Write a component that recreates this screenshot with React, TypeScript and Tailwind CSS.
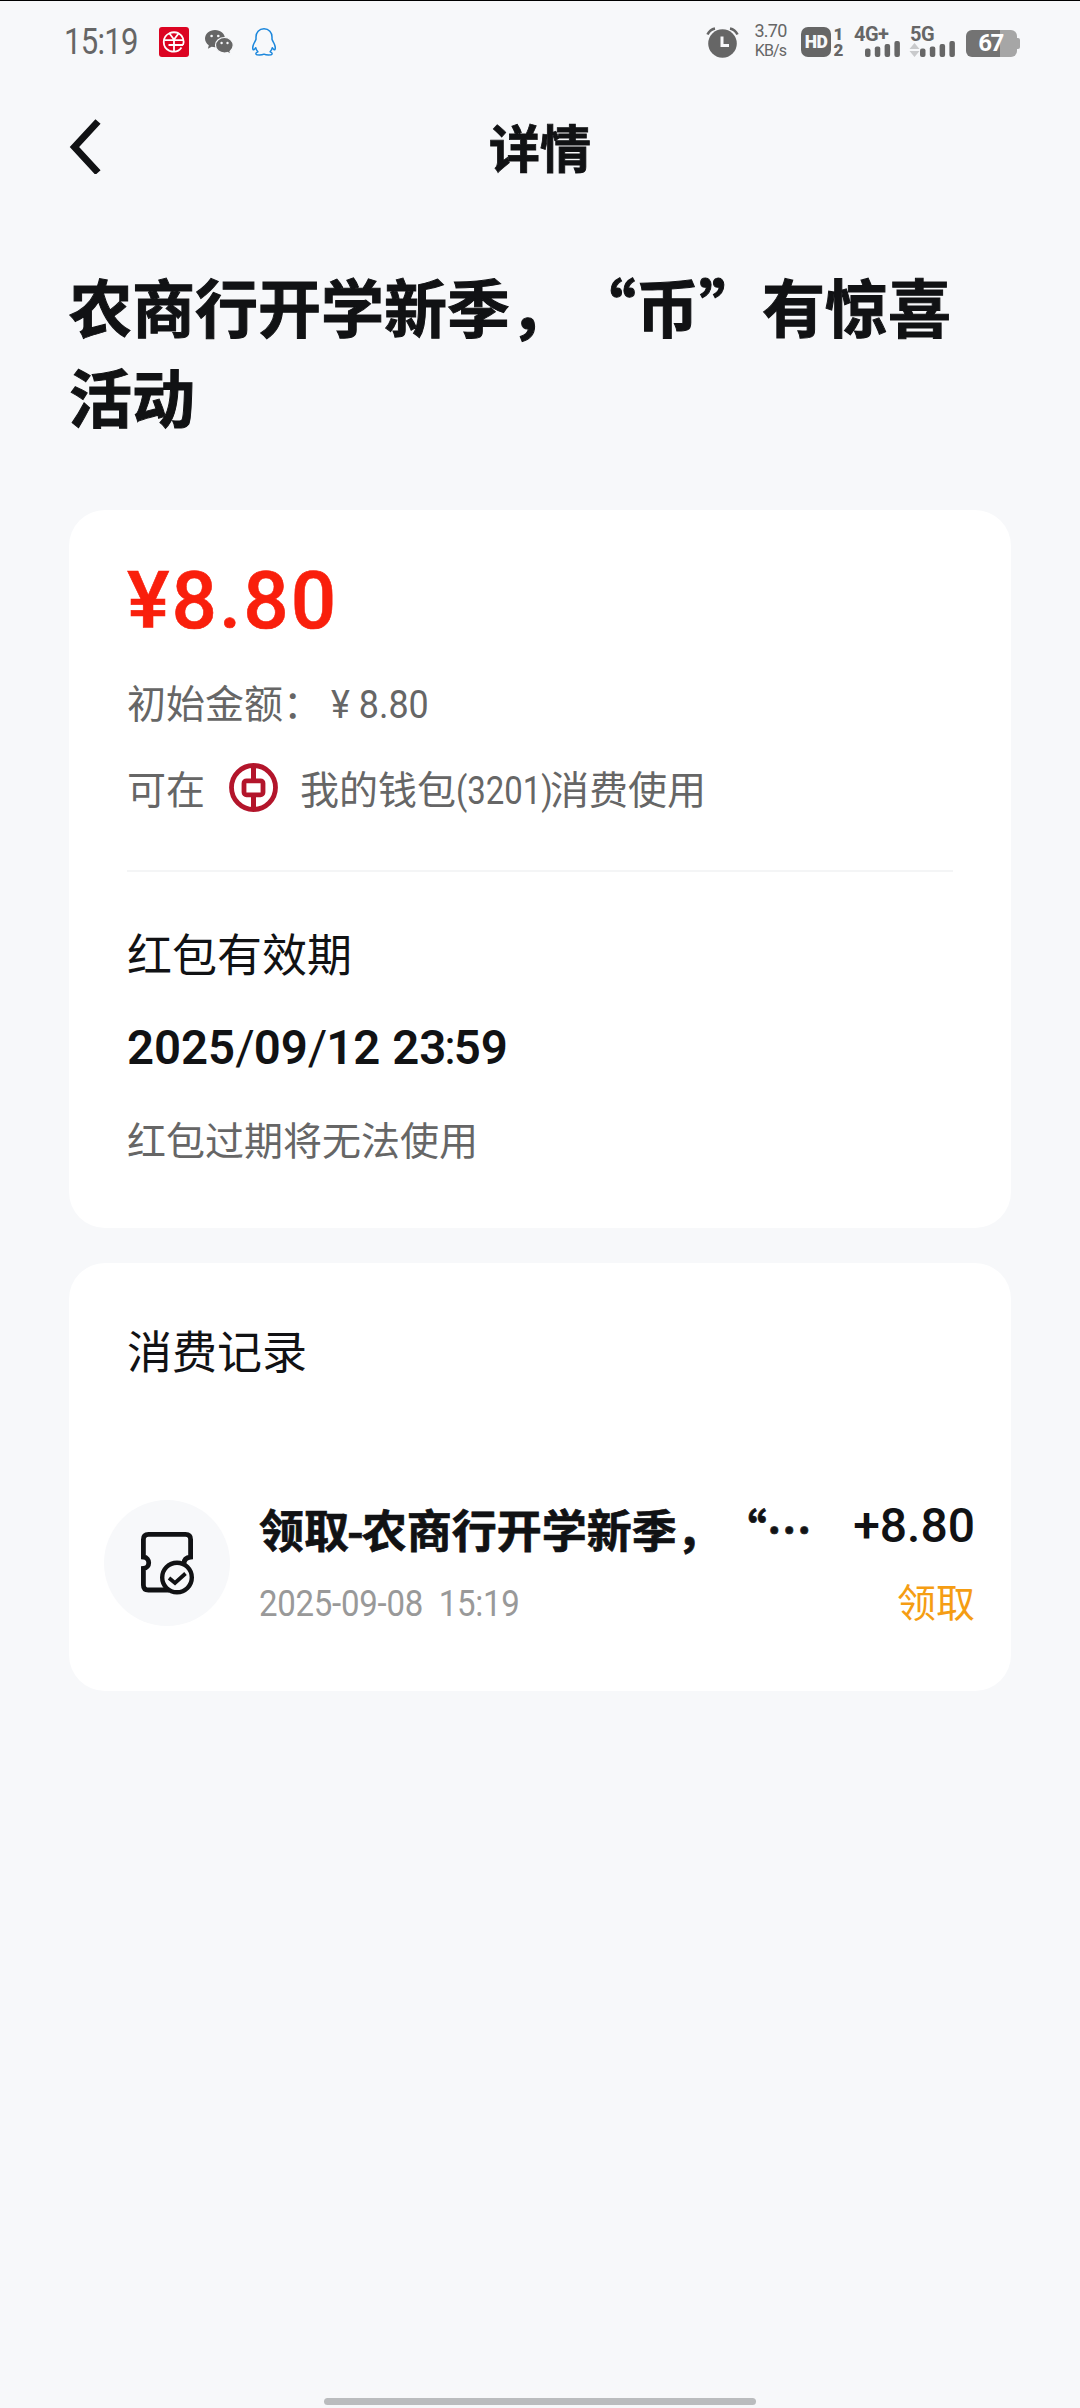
import type { ReactNode } from "react";

const cjk = "font-['Noto_Sans_CJK_SC',sans-serif]";
const mixed = "font-['Roboto','Noto_Sans_CJK_SC',sans-serif]";

function SignalBars() {
  return (
    <svg width="35" height="16" viewBox="0 0 35 16" fill="#666" className="shrink-0">
      <rect x="0" y="7.5" width="5.5" height="8.5" rx="2" />
      <rect x="9.8" y="5.5" width="5.5" height="10.5" rx="2" />
      <rect x="19.6" y="3" width="5.5" height="13" rx="2" />
      <rect x="29.4" y="0" width="5.5" height="16" rx="2" />
    </svg>
  );
}

function StatusBar() {
  return (
    <div className="flex h-[82px] items-center pl-[64px] text-[#666]">
      <span className={`${mixed} w-[95px] shrink-0 origin-left scale-x-[0.84] text-[37px] leading-9 tracking-[-0.9px]`}>15:19</span>
      <svg width="30" height="30" viewBox="0 0 30 30" className="shrink-0">
        <rect width="30" height="30" rx="3" fill="#dc0422" />
        <g fill="none" stroke="#fff" strokeWidth="1.8">
          <path d="M10.5 6.2A9.6 9.6 0 0 0 10.5 23.8M19.5 6.2A9.6 9.6 0 0 1 24 18M10.5 6.2Q15 4.3 19.5 6.2M10.5 23.8Q18.5 26.5 22.5 20.5" />
          <path d="M10.5 6.5L15 12.5L19.5 6.5M5.5 13.2H24.5M9.5 18H24M15 12.5V24.8" />
        </g>
      </svg>
      <svg width="29" height="25" viewBox="0 0 29 25" className="ml-4 shrink-0">
        <path d="M10 0C4.3 0 0 3.9 0 8.6c0 2.8 1.5 5.2 3.8 6.7L2.9 18.8l3.7-2c1.1.3 2.2.5 3.4.5 5.6 0 10-3.9 10-8.7S15.6 0 10 0z" fill="#666" />
        <path d="M19.5 7.5c-5 0-9 3.5-9 7.8s4 7.7 9 7.7c1.1 0 2.1-.2 3.1-.5l3.2 1.9-.8-3c2-1.4 3.2-3.6 3.2-6.1 0-4.3-3.9-7.8-8.7-7.8z" fill="#666" stroke="#f7f8fa" strokeWidth="1.2" />
        <g fill="#f7f8fa">
          <circle cx="6.6" cy="6" r="1.3" />
          <circle cx="13.3" cy="6" r="1.3" />
          <circle cx="16.6" cy="13" r="1.2" />
          <circle cx="22.5" cy="13" r="1.2" />
        </g>
      </svg>
      <svg width="24" height="28" viewBox="0 0 24 28" fill="none" stroke="#1b87dc" strokeWidth="1.5" strokeLinejoin="round" className="ml-[18px] shrink-0">
        <path d="M12 .8C7 .8 4 4.4 4 9v2.2C3.6 12.5 3 13.4 2.4 14.5.9 17.3.3 20 1.1 21.6c.6.5 1.7-.4 2.6-1.9.3 1.6 1 2.9 2.2 4-1.5.6-2.2 1.5-1.9 2.4.6 1.3 5.8 1.2 8 .1 2.2 1.1 7.4 1.2 8-.1.3-.9-.4-1.8-1.9-2.4 1.2-1.1 1.9-2.4 2.2-4 .9 1.5 2 2.4 2.6 1.9.8-1.6.2-4.3-1.3-7.1-.6-1.1-1.2-2-1.6-3.3V9C20 4.4 17 .8 12 .8z" />
      </svg>

      <div className="mr-[60px] ml-auto flex h-[82px] items-center">
        <svg width="33" height="31" viewBox="0 0 33 31" className="shrink-0">
          <circle cx="16.5" cy="16.5" r="14.3" fill="#666" />
          <path d="M1.5 7.5Q4 2.5 9 1.5M31.5 7.5Q29 2.5 24 1.5" stroke="#666" strokeWidth="2.6" fill="none" />
          <path d="M16 9.5V18.5H23" stroke="#f7f8fa" strokeWidth="3" fill="none" />
        </svg>
        <div className={`${mixed} -mt-1 ml-[15px] flex w-[33px] flex-col items-center text-center whitespace-nowrap`}>
          <span className="text-[18px] leading-[20px] tracking-[-0.8px]">3.70</span>
          <span className="text-[16px] leading-[19px] tracking-[-0.8px]">KB/s</span>
        </div>
        <div className="ml-[14px] flex h-[30px] w-[30px] items-center justify-center rounded-[7px] bg-[#666] font-['Roboto',sans-serif] text-[17.5px] font-black tracking-[-0.5px] text-[#f7f8fa]">HD</div>
        <div className="ml-[2px] flex h-[32px] w-[11px] flex-col items-center font-['Roboto',sans-serif] text-[17px] leading-4 font-black">
          <span>1</span>
          <span>2</span>
        </div>
        <div className="ml-[10px] flex h-[30px] w-[46px] flex-col items-end justify-between">
          <span className="w-full font-['Roboto',sans-serif] text-[20px] leading-[14px] font-bold tracking-[-0.5px]">4G+</span>
          <SignalBars />
        </div>
        <div className="ml-[10px] flex h-[30px] w-[46px] flex-col justify-between">
          <span className="font-['Roboto',sans-serif] text-[20px] leading-[14px] font-bold tracking-[-0.5px]">5G</span>
          <div className="flex items-end">
            <svg width="11" height="14" viewBox="0 0 11 14" fill="#c9cacc" className="-ml-px shrink-0">
              <path d="M5.5 0L10.5 6H.5zM5.5 14L10.5 8H.5z" />
            </svg>
            <SignalBars />
          </div>
        </div>
        <div className="ml-[10px] flex items-center pt-[3px]">
          <div className="flex h-[27px] w-[51px] items-center justify-center rounded-[6px] bg-linear-to-r from-[#737373] from-67% to-[#a6a6a6] to-67% pr-[2px] pb-[2px] font-['Roboto',sans-serif] text-[24px] leading-6 font-bold tracking-[-1.5px] text-white">67</div>
          <div className="h-[11px] w-[3px] rounded-r-[2px] bg-[#a6a6a6]" />
        </div>
      </div>
    </div>
  );
}

function BankLogo() {
  return (
    <svg width="49" height="49" viewBox="0 0 49 49" fill="none" stroke="#b3152b" className="shrink-0">
      <circle cx="24.5" cy="24.5" r="22" strokeWidth="4.8" />
      <rect x="15" y="17.8" width="19" height="14" rx="2.5" strokeWidth="4.8" />
      <path d="M24.5 3v14M24.5 32v14" strokeWidth="5" />
    </svg>
  );
}

function CouponIcon() {
  return (
    <svg width="54" height="64" viewBox="0 0 54 64" fill="none" stroke="#111214" strokeWidth="4.8">
      <path d="M29 59H8.5Q3.4 59 3.4 54V37.5C10.5 37 10.5 26.5 3.4 26V8.5Q3.4 3.4 8.5 3.4H45.5Q50.6 3.4 50.6 8.5V26C46 26.5 44 29 44 32.5" />
      <circle cx="37" cy="46.5" r="14.8" strokeWidth="4.4" />
      <path d="M29 47L35 52L45.5 42.5" strokeWidth="3.8" />
    </svg>
  );
}

function Card({ children }: { children: ReactNode }) {
  return <section className="mx-[69px] rounded-[36px] bg-white">{children}</section>;
}

export default function App() {
  return (
    <div
      lang="zh-CN"
      className={`flex h-[2408px] w-[1080px] flex-col overflow-hidden border-t border-black bg-[#f7f8fa] text-[#111214] [text-spacing-trim:space-all] ${cjk}`}
    >
      <StatusBar />

      <header className="grid h-[126px] grid-cols-[1fr_auto_1fr] items-center px-[68px]">
        <svg width="34" height="56" viewBox="0 0 34 56" fill="none" stroke="#111214" strokeWidth="7">
          <path d="M30 3.5L6.5 29L30 54.5" />
        </svg>
        <h1 className="text-[51px] font-bold [-webkit-text-stroke:0.8px_#111214]">详情</h1>
      </header>

      <h2 className="mt-[51px] mr-[69px] ml-[69px] text-[63px] leading-[90px] font-bold whitespace-nowrap [-webkit-text-stroke:1px_#111214]">
        农商行开学新季，“币”有惊喜
        <br />
        活动
      </h2>

      <div className="mt-[70px] flex flex-col gap-[35px]">
        <Card>
          <div className="px-[58px] pt-[51px] pb-[62px]">
            <div className={`${mixed} text-[80px] leading-[80px] font-medium tracking-[2px] text-[#f91f0c] [-webkit-text-stroke:0.6px_#f91f0c]`}>¥8.80</div>
            <div className={`${mixed} mt-[36px] flex text-[39px] leading-[56px] text-[#666]`}>
              <span className="w-[204px] shrink-0 whitespace-nowrap">初始金额：</span>
              <span className="origin-left scale-x-[0.92]">¥ 8.80</span>
            </div>
            <div className={`${mixed} mt-[26px] flex h-[56px] items-center text-[39px] leading-[56px] whitespace-nowrap text-[#666]`}>
              <span className="mt-[8px] mr-[24px]">可在</span>
              <BankLogo />
              <span className="mt-[8px] ml-[22px]">
                我的钱包<span className="inline-block w-[94px] origin-left scale-x-[0.845]">(3201)</span>消费使用
              </span>
            </div>
            <div className="mt-[55px] h-[2px] bg-[#f4f5f6]" />
            <h3 className="mt-[51px] text-[45px] leading-[60px]">红包有效期</h3>
            <div className={`${mixed} mt-[37px] origin-left scale-x-[0.986] text-[48px] leading-[56px] font-semibold`}>
              2025<span className="font-normal tracking-[-1px]">/</span>09<span className="font-normal tracking-[-1px]">/</span>12
              <span> 23</span>
              <span className="-mr-[2px] -ml-[2px] font-normal">:</span>59
            </div>
            <div className="mt-[34px] text-[39px] leading-[56px] text-[#666]">红包过期将无法使用</div>
          </div>
        </Card>

        <Card>
          <div className="pt-[57px] pb-[65px]">
            <h3 className="ml-[58px] text-[45px] leading-[60px]">消费记录</h3>
            <div className="mt-[120px] flex h-[126px] pr-[36px] pl-[35px]">
              <div className="flex w-[126px] shrink-0 items-center justify-center rounded-full bg-[#f7f8fa]">
                <CouponIcon />
              </div>
              <div className="ml-[29px] flex w-[560px] flex-col whitespace-nowrap">
                <div className="mt-[2px] text-[45px] leading-[54px] font-bold [-webkit-text-stroke:0.7px_#111214]">
                  领取<span className="-mx-[2px]">-</span>农商行开学新季，“…
                </div>
                <div className={`${mixed} mt-[25px] origin-left scale-x-[0.892] text-[37px] leading-[46px] tracking-[-0.3px] text-[#999]`}>2025-09-08&nbsp; 15:19</div>
              </div>
              <div className={`${mixed} ml-auto flex flex-col items-end`}>
                <div className="mt-[2px] text-[48px] leading-[48px] font-medium">+8.80</div>
                <div className="mt-[28px] text-[39px] leading-[52px] text-[#f59d13]">领取</div>
              </div>
            </div>
          </div>
        </Card>
      </div>

      <div className="mx-auto mt-auto mb-[3px] h-[7px] w-[432px] rounded-full bg-[#babcbe]" />
    </div>
  );
}
